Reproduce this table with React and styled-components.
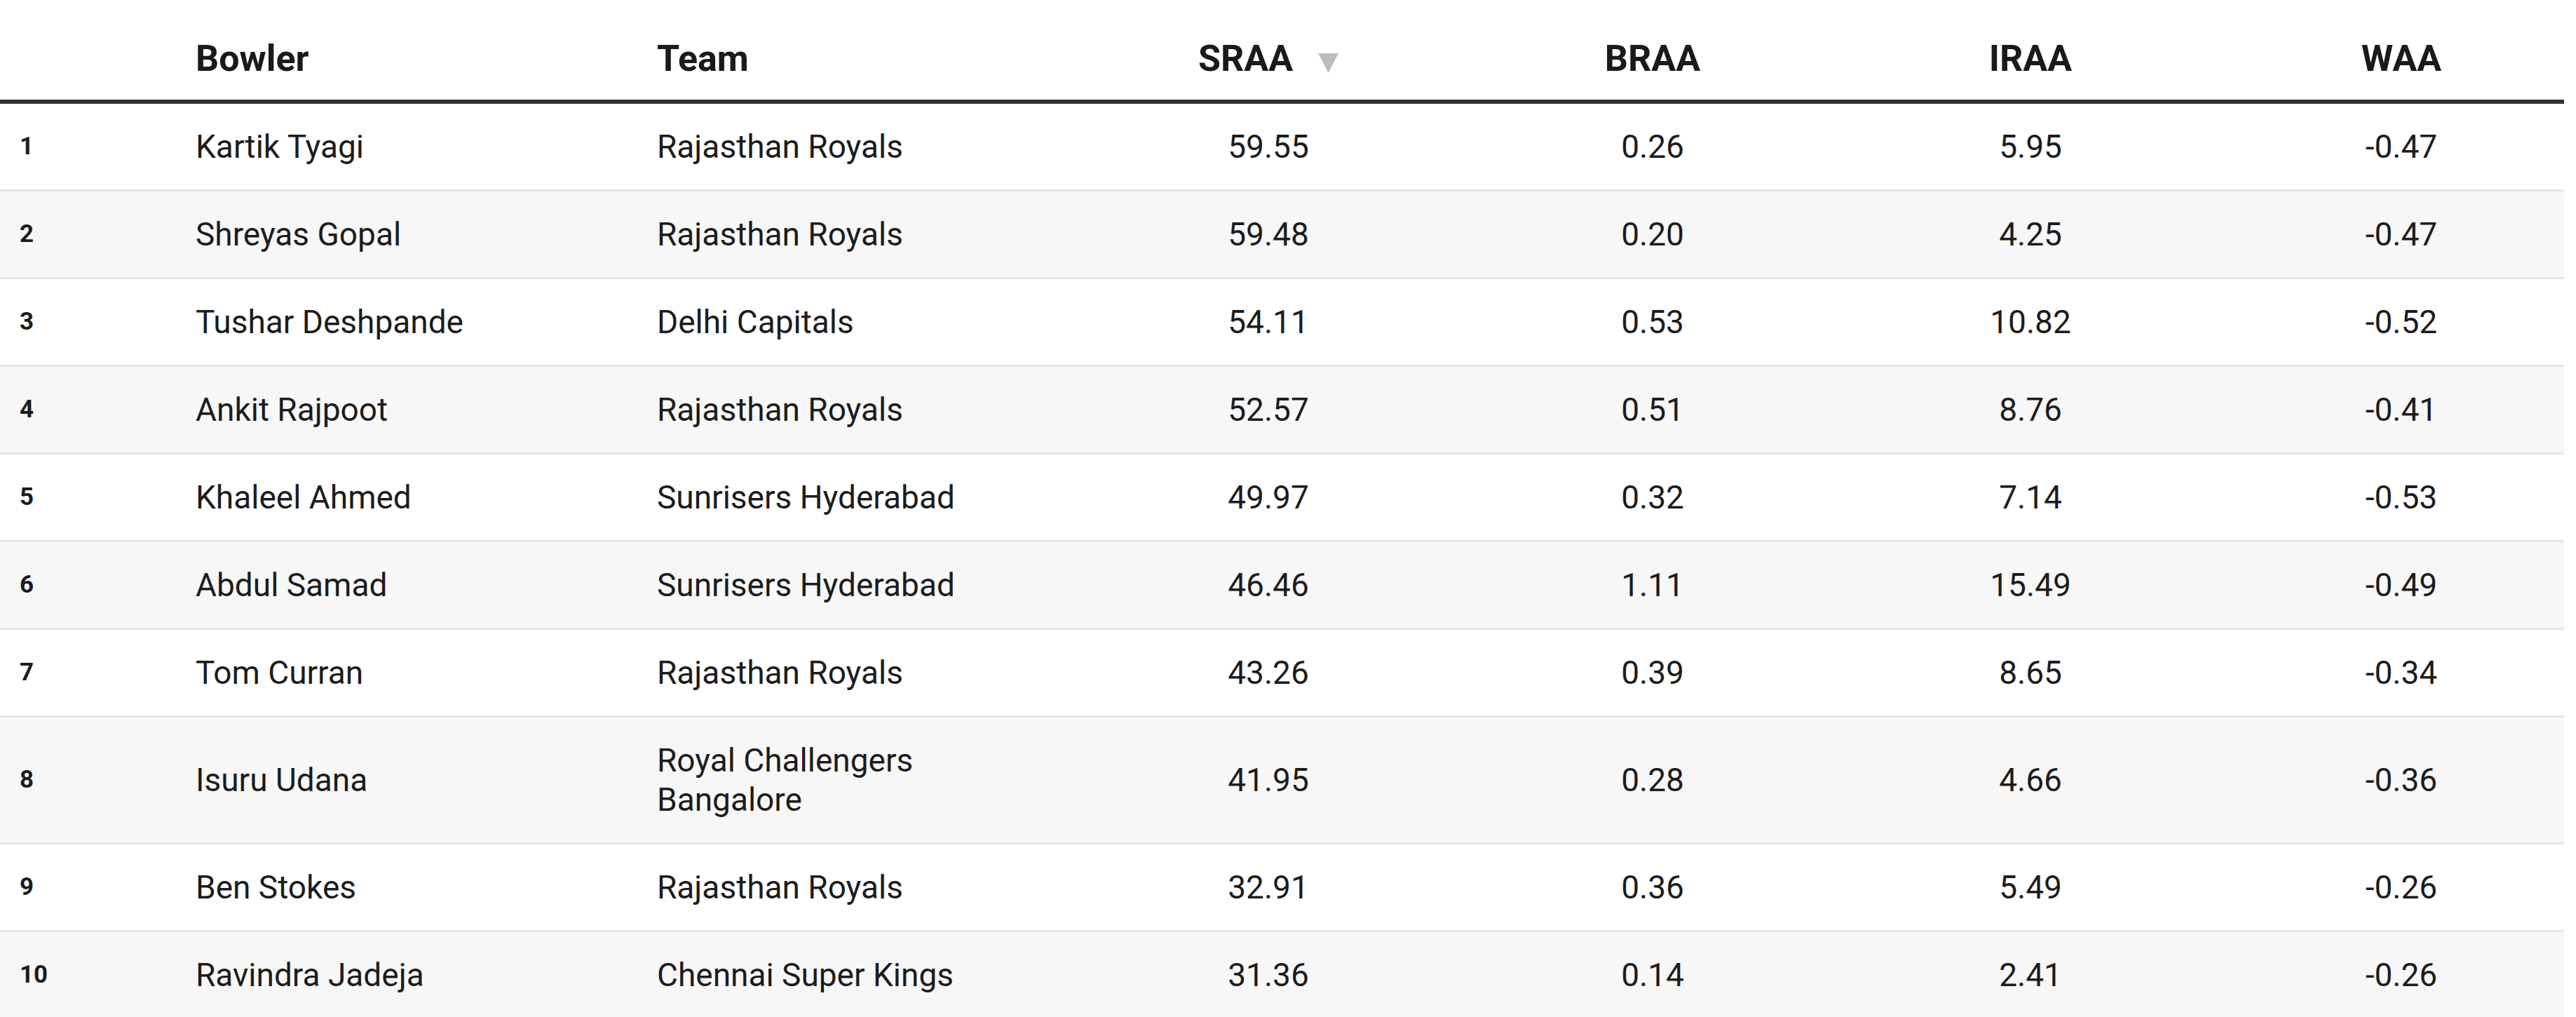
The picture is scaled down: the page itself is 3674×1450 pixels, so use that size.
import React from "react"
import styled, { createGlobalStyle } from "styled-components"

const GlobalStyle = createGlobalStyle`
  body {
    margin: 0;
    background: #ffffff;
    font-family: Roboto, "Liberation Sans", sans-serif;
    color: #1c1c1c;
  }
`

const columns = [
  { key: "rank", label: "", width: 279, align: "left" },
  { key: "bowler", label: "Bowler", width: 658, align: "left" },
  { key: "team", label: "Team", width: 566, align: "left" },
  { key: "sraa", label: "SRAA", width: 612, align: "center", sorted: true },
  { key: "braa", label: "BRAA", width: 484, align: "center" },
  { key: "iraa", label: "IRAA", width: 594, align: "center" },
  { key: "waa", label: "WAA", width: 464, align: "center" },
]

const rows = [
  ["Kartik Tyagi", "Rajasthan Royals", "59.55", "0.26", "5.95", "-0.47"],
  ["Shreyas Gopal", "Rajasthan Royals", "59.48", "0.20", "4.25", "-0.47"],
  ["Tushar Deshpande", "Delhi Capitals", "54.11", "0.53", "10.82", "-0.52"],
  ["Ankit Rajpoot", "Rajasthan Royals", "52.57", "0.51", "8.76", "-0.41"],
  ["Khaleel Ahmed", "Sunrisers Hyderabad", "49.97", "0.32", "7.14", "-0.53"],
  ["Abdul Samad", "Sunrisers Hyderabad", "46.46", "1.11", "15.49", "-0.49"],
  ["Tom Curran", "Rajasthan Royals", "43.26", "0.39", "8.65", "-0.34"],
  ["Isuru Udana", "Royal Challengers Bangalore", "41.95", "0.28", "4.66", "-0.36"],
  ["Ben Stokes", "Rajasthan Royals", "32.91", "0.36", "5.49", "-0.26"],
  ["Ravindra Jadeja", "Chennai Super Kings", "31.36", "0.14", "2.41", "-0.26"],
]

const SortArrow = () => (
  <ArrowIcon viewBox="0 0 29 28" width="29" height="28">
    <polygon points="0,0 29,0 14.5,28" fill="#bdbdbd" />
  </ArrowIcon>
)

const App = () => {
  return (
    <>
      <GlobalStyle />
      <StTable>
        <colgroup>
          {columns.map((c) => (
            <col key={c.key} style={{ width: c.width }} />
          ))}
        </colgroup>
        <thead>
          <tr>
            {columns.map((c) => (
              <StHead key={c.key} $align={c.align}>
                {c.label}
                {c.sorted && <SortArrow />}
              </StHead>
            ))}
          </tr>
        </thead>
        <tbody>
          {rows.map((r, i) => (
            <StRow key={i}>
              <StRank>{i + 1}</StRank>
              <StCell $align="left">{r[0]}</StCell>
              <StTeam>{r[1]}</StTeam>
              <StCell $align="center">{r[2]}</StCell>
              <StCell $align="center">{r[3]}</StCell>
              <StCell $align="center">{r[4]}</StCell>
              <StCell $align="center">{r[5]}</StCell>
            </StRow>
          ))}
        </tbody>
      </StTable>
    </>
  )
}

export default App

const StTable = styled.table`
  width: 3657px;
  table-layout: fixed;
  border-collapse: separate;
  border-spacing: 0;
`

const StHead = styled.th`
  padding: 54px 0 28px;
  font-size: 52px;
  line-height: 60px;
  font-weight: 700;
  color: #1a1a1a;
  text-align: ${(p) => p.$align};
  white-space: nowrap;
  border-bottom: 6px solid #333333;
`

const ArrowIcon = styled.svg`
  display: inline-block;
  margin-left: 36px;
  vertical-align: -3px;
`

const StRow = styled.tr`
  background: #ffffff;

  &:nth-child(even) {
    background: #f7f7f7;
  }
`

const StCell = styled.td`
  padding: 33px 0;
  font-size: 46px;
  line-height: 56px;
  text-align: ${(p) => p.$align};
  vertical-align: middle;
  border-bottom: 3px solid #e6e6e6;
`

const StRank = styled(StCell)`
  padding-left: 28px;
  font-size: 35px;
  font-weight: 700;
`

const StTeam = styled(StCell)`
  padding-right: 40px;
`
